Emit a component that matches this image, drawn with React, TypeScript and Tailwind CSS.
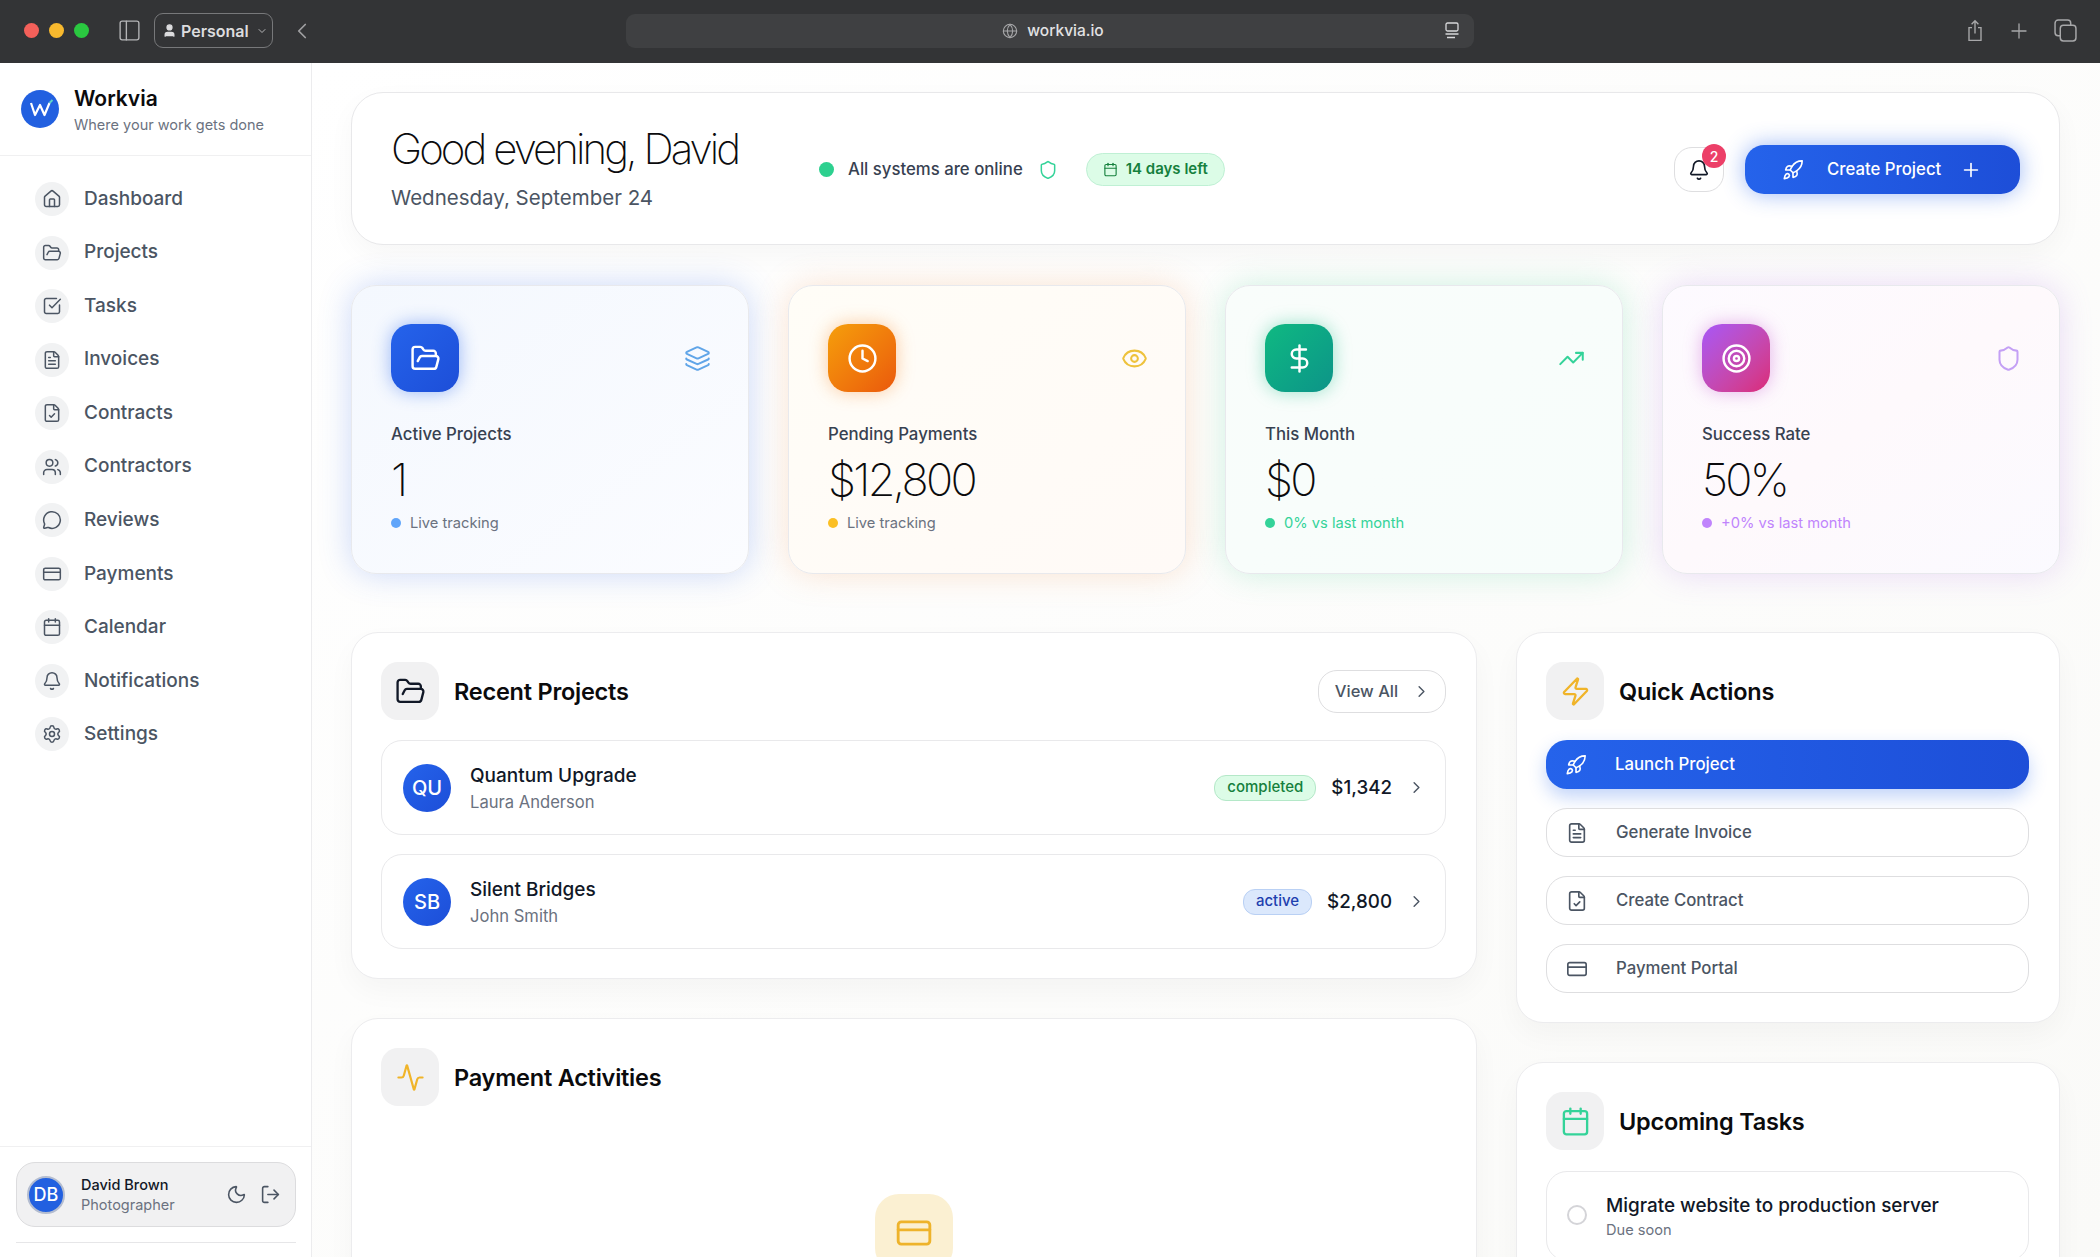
import {
  Activity,
  Bell,
  Calendar,
  ChevronDown,
  ChevronLeft,
  ChevronRight,
  Clock,
  CreditCard,
  DollarSign,
  Eye,
  FileCheck,
  FileText,
  FolderOpen,
  Globe,
  Home,
  Layers,
  LogOut,
  MessageCircle,
  Moon,
  PanelLeft,
  Plus,
  Rocket,
  Settings,
  Shield,
  SquareCheckBig,
  Target,
  TrendingUp,
  User,
  Users,
  Zap,
} from 'lucide-react';
import type { ReactNode } from 'react';

const navItems = [
  { label: 'Dashboard', icon: Home },
  { label: 'Projects', icon: FolderOpen },
  { label: 'Tasks', icon: SquareCheckBig },
  { label: 'Invoices', icon: FileText },
  { label: 'Contracts', icon: FileCheck },
  { label: 'Contractors', icon: Users },
  { label: 'Reviews', icon: MessageCircle },
  { label: 'Payments', icon: CreditCard },
  { label: 'Calendar', icon: Calendar },
  { label: 'Notifications', icon: Bell },
  { label: 'Settings', icon: Settings },
];

const stats = [
  {
    label: 'Active Projects',
    value: '1',
    note: 'Live tracking',
    icon: FolderOpen,
    corner: Layers,
    card: 'bg-gradient-to-br from-[#f4f8fe] to-[#fbfcff] shadow-[0_0_32px_rgba(59,110,230,0.26)]',
    tile: 'bg-gradient-to-br from-[#2563eb] to-[#1d4ed8] shadow-[0_0_18px_rgba(37,99,235,0.45)]',
    cornerColor: 'text-[#60a5e8]',
    dot: 'bg-[#60a5fa]',
    noteColor: 'text-[#6b7280]',
  },
  {
    label: 'Pending Payments',
    value: '$12,800',
    note: 'Live tracking',
    icon: Clock,
    corner: Eye,
    card: 'bg-gradient-to-br from-[#fffdf7] to-[#fffaf7] shadow-[0_0_32px_rgba(240,150,90,0.26)]',
    tile: 'bg-gradient-to-br from-[#f59e0b] to-[#ea580c] shadow-[0_0_18px_rgba(245,130,30,0.4)]',
    cornerColor: 'text-[#eec23c]',
    dot: 'bg-[#fbbf24]',
    noteColor: 'text-[#6b7280]',
  },
  {
    label: 'This Month',
    value: '$0',
    note: '0% vs last month',
    icon: DollarSign,
    corner: TrendingUp,
    card: 'bg-gradient-to-br from-[#f9fdfb] to-[#f7fdfb] shadow-[0_0_32px_rgba(60,200,140,0.24)]',
    tile: 'bg-gradient-to-br from-[#10b981] to-[#0d9488] shadow-[0_0_18px_rgba(16,185,129,0.4)]',
    cornerColor: 'text-[#34d399]',
    dot: 'bg-[#34d399]',
    noteColor: 'text-[#34d399]',
  },
  {
    label: 'Success Rate',
    value: '50%',
    note: '+0% vs last month',
    icon: Target,
    corner: Shield,
    card: 'bg-gradient-to-br from-[#fdfaff] via-[#fef9fc] to-[#fbfaff] shadow-[0_0_32px_rgba(170,110,230,0.24)]',
    tile: 'bg-gradient-to-br from-[#a855f7] to-[#db2777] shadow-[0_0_18px_rgba(190,70,200,0.4)]',
    cornerColor: 'text-[#c4a0f5]',
    dot: 'bg-[#c084fc]',
    noteColor: 'text-[#c084fc]',
  },
];

const projects = [
  { initials: 'QU', name: 'Quantum Upgrade', client: 'Laura Anderson', status: 'completed', amount: '$1,342' },
  { initials: 'SB', name: 'Silent Bridges', client: 'John Smith', status: 'active', amount: '$2,800' },
];

const actions = [
  { label: 'Generate Invoice', icon: FileText },
  { label: 'Create Contract', icon: FileCheck },
  { label: 'Payment Portal', icon: CreditCard },
];

function TitleBar() {
  return (
    <div className="flex h-[63px] shrink-0 items-center bg-[#333436] pb-[2px] text-[#d0d0d2]">
      <div className="ml-[24px] flex gap-[10px]">
        <span className="h-[15px] w-[15px] rounded-full bg-[#f4605a]" />
        <span className="h-[15px] w-[15px] rounded-full bg-[#f8b92e]" />
        <span className="h-[15px] w-[15px] rounded-full bg-[#2ac840]" />
      </div>
      <PanelLeft className="ml-[28px] h-[25px] w-[25px] text-[#b4b4b6]" strokeWidth={1.3} />
      <div className="ml-[12px] flex h-[35px] w-[119px] items-center rounded-[9px] border border-[#77787a] pl-[7px] text-[16px] font-semibold text-[#dcdcde]">
        <User className="mr-[4px] h-[15px] w-[15px] fill-[#dcdcde]" />
        Personal
        <ChevronDown className="ml-[7px] h-[12px] w-[12px] text-[#b4b4b6]" />
      </div>
      <ChevronLeft className="ml-[16px] h-[26px] w-[26px] text-[#a0a0a2]" strokeWidth={1.6} />
      <div className="relative ml-[311px] flex h-[34px] w-[848px] items-center justify-center gap-[9px] rounded-[9px] bg-[#3f4042] pl-[6px] text-[15.5px] font-medium text-[#e2e2e4]">
        <Globe className="h-[16px] w-[16px] text-[#a8a8aa]" strokeWidth={1.6} />
        workvia.io
        <svg viewBox="0 0 16 18" className="absolute right-[14px] h-[18px] w-[16px]" fill="none" stroke="#d8d8da" strokeWidth="1.3">
          <rect x="2" y="1" width="12" height="8" rx="1.5" />
          <path d="M1.5 12h13M3 15.5h8" />
        </svg>
      </div>
      <div className="ml-auto mr-[23px] flex items-center gap-[23px] text-[#a8a8aa]">
        <svg viewBox="0 0 20 28" className="h-[24px] w-[18px]" fill="none" stroke="currentColor" strokeWidth="1.6">
          <path d="M6.5 10H3v15h14V10h-3.5M10 17V2M6 6l4-4 4 4" />
        </svg>
        <Plus className="h-[24px] w-[24px]" strokeWidth={1.3} />
        <svg viewBox="0 0 22 22" className="h-[23px] w-[23px]" fill="none" stroke="currentColor" strokeWidth="1.4">
          <rect x="6" y="6" width="15" height="15" rx="3" />
          <path d="M6 16H4a3 3 0 0 1-3-3V4a3 3 0 0 1 3-3h9a3 3 0 0 1 3 3v2" />
        </svg>
      </div>
    </div>
  );
}

function Sidebar() {
  return (
    <aside className="flex w-[312px] shrink-0 flex-col border-r border-[#ececee] bg-white">
      <div className="flex h-[93px] shrink-0 items-center gap-[15px] border-b border-[#f0f0f1] pl-[21px]">
        <svg viewBox="0 0 38 38" className="h-[38px] w-[38px] shrink-0">
          <circle cx="19" cy="19" r="19" fill="#2260e0" />
          <path d="M10 13l4 12 5-10 4.500 10 5-12" fill="none" stroke="#fff" strokeWidth="2.2" strokeLinejoin="round" />
          <path d="M28.500 13l3-3" stroke="#5fd6c8" strokeWidth="2" />
        </svg>
        <div className="pt-[2px]">
          <div className="text-[21px] font-semibold leading-[30px] text-[#0b0b0d]">Workvia</div>
          <div className="text-[14.5px] leading-[22px] text-[#6b7280]">Where your work gets done</div>
        </div>
      </div>
      <nav className="flex flex-col gap-[19.55px] pl-[35px] pt-[26px]">
        {navItems.map(({ label, icon: Icon }) => (
          <div key={label} className="flex h-[34px] items-center gap-[15px]">
            <span className="flex h-[34px] w-[34px] items-center justify-center rounded-full bg-[#f1f2f3]">
              <Icon className="h-[20px] w-[20px] text-[#4b5563]" strokeWidth={1.8} />
            </span>
            <span className="text-[19px] font-medium text-[#4b5563]">{label}</span>
          </div>
        ))}
      </nav>
      <div className="mt-auto border-t border-[#f0f0f1] pb-[14px] pl-[16px] pr-[15px] pt-[15px]">
        <div className="flex h-[65px] items-center rounded-[19px] border border-[#dcdcde] bg-[#f1f1f2] pl-[10px] pr-[14px]">
          <span className="flex h-[38px] w-[38px] items-center justify-center rounded-full border-[2px] border-[#b4bdd0] bg-[#2260e0] text-[18px] font-medium text-white">
            DB
          </span>
          <div className="ml-[16px]">
            <div className="text-[14.5px] font-medium leading-[20px] text-[#111827]">David Brown</div>
            <div className="text-[14.5px] leading-[20px] text-[#6b7280]">Photographer</div>
          </div>
          <Moon className="ml-auto h-[21px] w-[21px] text-[#4b5563]" strokeWidth={1.8} />
          <LogOut className="ml-[13px] h-[21px] w-[21px] text-[#4b5563]" strokeWidth={1.8} />
        </div>
        <div className="mt-[15px] h-px bg-[#e6e6e8]" />
      </div>
    </aside>
  );
}

function SectionHead({ icon, title, right }: { icon: ReactNode; title: string; right?: ReactNode }) {
  return (
    <div className="flex h-[58px] items-center">
      <span className="flex h-[58px] w-[58px] items-center justify-center rounded-[17px] bg-[#f1f1f2]">{icon}</span>
      <h2 className="ml-[15px] pt-[2px] text-[23.5px] font-semibold tracking-[-0.01em] text-[#0b0b0d]">{title}</h2>
      {right}
    </div>
  );
}

function Panel({ children, className }: { children: ReactNode; className?: string }) {
  return (
    <section
      className={`rounded-[27px] border border-[#ececee] bg-white pl-[29px] pr-[30px] pt-[29px] shadow-[0_12px_28px_rgba(0,0,0,0.035)] ${className ?? ''}`}
    >
      {children}
    </section>
  );
}

function Greeting() {
  return (
    <header className="flex h-[153px] items-center rounded-[32px] border border-[#e8e8ea] bg-white pl-[39px] pr-[39px] pt-[2px] shadow-[0_10px_28px_rgba(0,0,0,0.035)]">
      <div className="w-[428px]">
        <h1 className="text-[42px] font-[250] leading-[46px] tracking-[-0.07em] text-[#0b0b0d]">Good evening, David</h1>
        <p className="mt-[10px] text-[20.5px] leading-[32px] text-[#4b5563]">Wednesday, September 24</p>
      </div>
      <span className="h-[15px] w-[15px] rounded-full bg-[#2dd08f]" />
      <span className="ml-[14px] text-[16.75px] font-medium text-[#374151]">All systems are online</span>
      <Shield className="ml-[15px] h-[20px] w-[20px] text-[#34d399]" strokeWidth={1.8} />
      <span className="ml-[28px] flex h-[33px] w-[139px] items-center justify-center gap-[8px] rounded-full border border-[#bff0d4] bg-[#dcfce7] text-[15px] font-semibold text-[#15803d]">
        <Calendar className="h-[15px] w-[15px]" strokeWidth={1.8} />
        14 days left
      </span>
      <button className="relative ml-auto flex h-[45px] w-[50px] items-center justify-center rounded-[18px] border border-[#dedee0] bg-white">
        <Bell className="h-[22px] w-[22px] text-[#111827]" strokeWidth={1.8} />
        <span className="absolute right-[-3px] top-[-4px] flex h-[24px] w-[24px] items-center justify-center rounded-full bg-[#ec3f68] text-[14px] font-medium text-white">
          2
        </span>
      </button>
      <button className="ml-[21px] flex h-[49px] w-[275px] items-center rounded-[19px] bg-gradient-to-r from-[#2563eb] to-[#1d4ed8] pl-[37px] text-[16.75px] font-medium text-white shadow-[0_0_22px_rgba(37,99,235,0.45)]">
        <Rocket className="h-[22px] w-[22px]" strokeWidth={1.8} />
        <span className="ml-[23px]">Create Project</span>
        <Plus className="ml-[19px] h-[22px] w-[22px]" strokeWidth={1.8} />
      </button>
    </header>
  );
}

function StatCard({ stat }: { stat: (typeof stats)[number] }) {
  const Icon = stat.icon;
  const Corner = stat.corner;
  return (
    <div className={`h-[289px] w-[398px] rounded-[25px] border border-[#e8e9ed] pl-[39px] pr-[37px] pt-[38px] ${stat.card}`}>
      <div className="flex items-center justify-between">
        <span className={`flex h-[68px] w-[68px] items-center justify-center rounded-[20px] ${stat.tile}`}>
          <Icon className="h-[31px] w-[31px] text-white" strokeWidth={1.9} />
        </span>
        <Corner className={`h-[27px] w-[27px] ${stat.cornerColor}`} strokeWidth={1.8} />
      </div>
      <div className="mt-[28px] text-[16.8px] font-medium leading-[28px] text-[#374151]">{stat.label}</div>
      <div className="mt-[5px] text-[45px] font-[250] leading-[54px] tracking-[-0.06em] text-[#0b0b0d]">{stat.value}</div>
      <div className="mt-[4px] flex items-center gap-[9px]">
        <span className={`h-[10px] w-[10px] rounded-full ${stat.dot}`} />
        <span className={`text-[14.7px] leading-[24px] ${stat.noteColor}`}>{stat.note}</span>
      </div>
    </div>
  );
}

function ProjectRow({ project }: { project: (typeof projects)[number] }) {
  const badge =
    project.status === 'completed'
      ? 'border-[#b4e8c8] bg-[#dcfce7] text-[#15803d]'
      : 'border-[#b9d0f4] bg-[#dbe8fc] text-[#1e40af]';
  return (
    <div className="flex h-[95px] items-center rounded-[21px] border border-[#e9e9eb] bg-white pl-[21px] pr-[19px]">
      <span className="flex h-[48px] w-[48px] items-center justify-center rounded-full bg-gradient-to-br from-[#2563eb] to-[#1d4ed8] text-[20px] font-medium text-white">
        {project.initials}
      </span>
      <div className="ml-[19px] pt-[2px]">
        <div className="text-[19px] font-medium leading-[27px] text-[#111827]">{project.name}</div>
        <div className="text-[16.6px] leading-[26px] text-[#6b7280]">{project.client}</div>
      </div>
      <span className={`ml-auto flex h-[26px] items-center rounded-[12px] border px-[12px] text-[15px] font-medium ${badge}`}>
        {project.status}
      </span>
      <span className="ml-[15px] pt-[2px] text-right text-[18.75px] font-medium text-[#111827]">{project.amount}</span>
      <ChevronRight className="ml-[15px] h-[19px] w-[19px] text-[#4b5563]" strokeWidth={1.8} />
    </div>
  );
}

export default function App() {
  return (
    <div className="flex h-[1257px] w-[2100px] flex-col overflow-hidden bg-white font-['Inter',sans-serif]">
      <TitleBar />
      <div className="flex min-h-0 flex-1">
        <Sidebar />
        <main className="min-w-0 flex-1 overflow-hidden bg-gradient-to-br from-white to-[#fafaf8] pl-[39px] pr-[40px] pt-[29px]">
          <Greeting />
          <div className="mt-[40px] flex justify-between">
            {stats.map((stat) => (
              <StatCard key={stat.label} stat={stat} />
            ))}
          </div>
          <div className="mt-[58px] flex justify-between">
            <div className="flex w-[1126px] flex-col gap-[39px]">
              <Panel className="h-[347px]">
                <SectionHead
                  icon={<FolderOpen className="h-[31px] w-[31px] text-[#111827]" strokeWidth={1.8} />}
                  title="Recent Projects"
                  right={
                    <button className="ml-auto flex h-[43px] w-[128px] items-center justify-center gap-[14px] rounded-[19px] border border-[#dedee0] bg-white pl-[2px] text-[16.5px] font-medium text-[#4b5563]">
                      View All
                      <ChevronRight className="h-[19px] w-[19px]" strokeWidth={1.8} />
                    </button>
                  }
                />
                <div className="mt-[20px] flex flex-col gap-[19px]">
                  {projects.map((project) => (
                    <ProjectRow key={project.name} project={project} />
                  ))}
                </div>
              </Panel>
              <Panel className="h-[400px]">
                <SectionHead
                  icon={<Activity className="h-[29px] w-[29px] text-[#f0b429]" strokeWidth={1.8} />}
                  title="Payment Activities"
                />
                <div className="mt-[88px] flex justify-center">
                  <span className="flex h-[78px] w-[78px] items-center justify-center rounded-[24px] bg-[#fbf0d2]">
                    <CreditCard className="h-[38px] w-[38px] text-[#eeb32b]" strokeWidth={1.8} />
                  </span>
                </div>
              </Panel>
            </div>
            <div className="flex w-[544px] flex-col gap-[39px]">
              <Panel className="h-[391px]">
                <SectionHead
                  icon={<Zap className="h-[31px] w-[31px] text-[#f0b429]" strokeWidth={1.8} />}
                  title="Quick Actions"
                />
                <div className="mt-[20px] flex flex-col gap-[19px]">
                  <div className="flex h-[49px] items-center rounded-[21px] bg-gradient-to-r from-[#2563eb] to-[#1d4ed8] pl-[19px] text-[16.8px] font-medium text-white shadow-[0_8px_18px_rgba(37,99,235,0.28)]">
                    <Rocket className="h-[22px] w-[22px]" strokeWidth={1.8} />
                    <span className="ml-[28px]">Launch Project</span>
                  </div>
                  {actions.map(({ label, icon: Icon }) => (
                    <div key={label} className="flex h-[49px] items-center rounded-[21px] border border-[#dedee0] bg-white pl-[19px] text-[16.8px] font-medium text-[#4b5563]">
                      <Icon className="h-[22px] w-[22px]" strokeWidth={1.8} />
                      <span className="ml-[28px]">{label}</span>
                    </div>
                  ))}
                </div>
              </Panel>
              <Panel className="h-[300px]">
                <SectionHead
                  icon={<Calendar className="h-[31px] w-[31px] text-[#34d399]" strokeWidth={1.8} />}
                  title="Upcoming Tasks"
                />
                <div className="mt-[21px] flex h-[90px] items-center rounded-[21px] border border-[#e9e9eb] bg-white pl-[20px]">
                  <span className="mb-[2px] h-[20px] w-[20px] rounded-full border-[2px] border-[#d4d4d8]" />
                  <div className="ml-[19px]">
                    <div className="text-[18.9px] font-medium leading-[27px] text-[#111827]">Migrate website to production server</div>
                    <div className="text-[14.6px] leading-[22px] text-[#6b7280]">Due soon</div>
                  </div>
                </div>
              </Panel>
            </div>
          </div>
        </main>
      </div>
    </div>
  );
}
